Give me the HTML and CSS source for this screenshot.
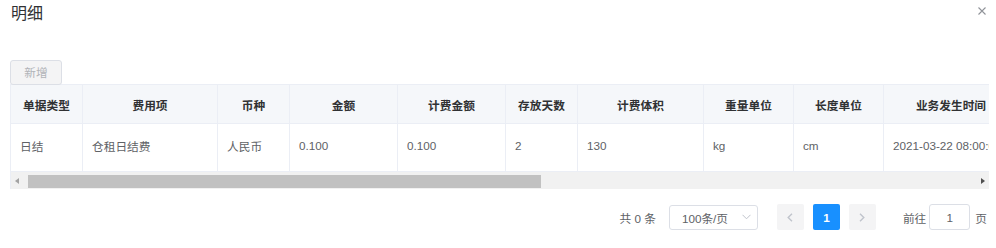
FILE: index.html
```html
<!DOCTYPE html>
<html lang="zh-CN">
<head>
<meta charset="utf-8">
<title>明细</title>
<link rel="stylesheet" href="styles.css">
</head>
<body>
<div class="dialog">
  <div class="dialog-header">
    <span class="dialog-title">明细</span>
    <button class="close-btn" aria-label="关闭">
      <svg width="8" height="8" viewBox="0 0 8 8"><path d="M0.5 0.5 L7.5 7.5 M7.5 0.5 L0.5 7.5" stroke="#909399" stroke-width="1.1" fill="none"/></svg>
    </button>
  </div>
  <div class="dialog-body">
    <div class="toolbar">
      <button class="btn-disabled">新增</button>
    </div>
    <div class="table-wrap">
      <div class="table-scroll">
        <table class="grid">
          <colgroup>
            <col class="w72"><col class="w135"><col class="w72"><col class="w108"><col class="w108">
            <col class="w72"><col class="w126"><col class="w90"><col class="w90"><col class="w135">
          </colgroup>
          <thead>
            <tr>
              <th>单据类型</th><th>费用项</th><th>币种</th><th>金额</th><th>计费金额</th>
              <th>存放天数</th><th>计费体积</th><th>重量单位</th><th>长度单位</th><th>业务发生时间</th>
            </tr>
          </thead>
          <tbody>
            <tr>
              <td>日结</td><td>仓租日结费</td><td>人民币</td><td>0.100</td><td>0.100</td>
              <td>2</td><td>130</td><td>kg</td><td>cm</td><td class="nowrap">2021-03-22 08:00:00</td>
            </tr>
          </tbody>
        </table>
      </div>
      <div class="hscroll">
        <div class="sb-btn"><span class="tri-left"></span></div>
        <div class="sb-track"><div class="sb-thumb"></div></div>
        <div class="sb-btn"><span class="tri-right"></span></div>
      </div>
    </div>
    <div class="pagination">
      <span class="total">共 0 条</span>
      <div class="select">
        <span>100条/页</span>
        <svg width="9" height="6" viewBox="0 0 9 6"><path d="M0.5 0.8 L4.5 4.8 L8.5 0.8" stroke="#c0c4cc" stroke-width="1" fill="none"/></svg>
      </div>
      <button class="pg-btn pg-prev" aria-label="上一页">
        <svg width="6" height="9" viewBox="0 0 6 9"><path d="M5 0.8 L1.2 4.5 L5 8.2" stroke="#c0c4cc" stroke-width="1.4" fill="none"/></svg>
      </button>
      <button class="pg-btn pg-active">1</button>
      <button class="pg-btn pg-next" aria-label="下一页">
        <svg width="6" height="9" viewBox="0 0 6 9"><path d="M1 0.8 L4.8 4.5 L1 8.2" stroke="#c0c4cc" stroke-width="1.4" fill="none"/></svg>
      </button>
      <span class="jump-label">前往</span>
      <div class="jump-input">1</div>
      <span class="jump-unit">页</span>
    </div>
  </div>
</div>
</body>
</html>
```

FILE: styles.css
```css
* { box-sizing: border-box; }
html, body { margin: 0; padding: 0; background: #fff; }
body {
  font-family: "Liberation Sans", "Noto Sans CJK SC", sans-serif;
  font-size: 11.7px;
  color: #606266;
  width: 996px;
  height: 248px;
  overflow: hidden;
}
.dialog { width: 996px; }
.dialog-header {
  display: flex;
  justify-content: space-between;
  align-items: flex-start;
  padding: 4px 10px 0 11px;
  height: 60px;
}
.dialog-title {
  font-size: 16px;
  line-height: 20px;
  color: #303133;
}
.close-btn {
  border: 0;
  background: none;
  padding: 0;
  margin-top: 3px;
  width: 8px;
  height: 8px;
  display: flex;
}
.dialog-body { padding: 0 7px 0 10px; }
.toolbar { display: flex; height: 25px; }
.btn-disabled {
  width: 52px;
  height: 25px;
  border: 1px solid #dcdfe6;
  border-radius: 3px;
  background: #f4f4f5;
  color: #b1b3b8;
  font-family: inherit;
  font-size: 11.7px;
  padding: 0;
  line-height: 23px;
}
.table-wrap {
  width: 979px;
  border-left: 1px solid #ebeef5;
  border-top: 1px solid #ebeef5;
  margin-top: -1px;
}
.table-scroll { overflow: hidden; width: 978px; }
.grid {
  table-layout: fixed;
  width: 1008px;
  border-collapse: separate;
  border-spacing: 0;
}
.w72 { width: 72px; }
.w90 { width: 90px; }
.w108 { width: 108px; }
.w126 { width: 126px; }
.w135 { width: 135px; }
.grid th, .grid td {
  border-right: 1px solid #ebeef5;
  border-bottom: 1px solid #ebeef5;
  padding: 0 9px;
  overflow: hidden;
  white-space: nowrap;
  vertical-align: middle;
}
.grid th {
  height: 39px;
  background: #f5f7fa;
  color: #303133;
  font-weight: bold;
  text-align: center;
  font-size: 11.7px;
}
.grid td {
  height: 48px;
  text-align: left;
  padding-bottom: 4px;
}
.hscroll {
  display: flex;
  height: 17px;
  width: 978px;
  background: #f1f1f1;
}
.sb-btn {
  width: 17px;
  height: 17px;
  display: flex;
  align-items: center;
  justify-content: center;
  flex: none;
}
.tri-left {
  width: 0; height: 0;
  border-top: 3px solid transparent;
  border-bottom: 3px solid transparent;
  border-right: 4px solid #a3a3a3;
  margin-left: -6px;
}
.tri-right {
  width: 0; height: 0;
  border-top: 3px solid transparent;
  border-bottom: 3px solid transparent;
  border-left: 4px solid #505050;
  margin-left: 4px;
}
.sb-track { flex: 1; position: relative; }
.sb-thumb {
  margin-top: 3px;
  width: 513px;
  height: 13px;
  background: #c1c1c1;
}
.pagination {
  display: flex;
  justify-content: flex-end;
  align-items: center;
  margin-top: 15px;
  padding-right: 2px;
  height: 26px;
}
.total { margin-right: 13px; }
.select {
  width: 89px;
  height: 25px;
  border: 1px solid #dcdfe6;
  border-radius: 3px;
  display: flex;
  align-items: center;
  justify-content: space-between;
  padding: 0 6px 0 12px;
  color: #606266;
  margin-right: 19px;
}
.pg-btn {
  width: 27px;
  height: 26px;
  border: 0;
  border-radius: 2px;
  background: #f4f4f5;
  padding: 0;
  display: flex;
  align-items: center;
  justify-content: center;
  font-family: inherit;
  font-size: 11.7px;
  font-weight: bold;
}
.pg-prev, .pg-active { margin-right: 9px; }
.pg-active { background: #1890ff; color: #fff; }
.pg-next { margin-right: 27px; }
.jump-label { margin-right: 3px; }
.jump-input {
  width: 41px;
  height: 26px;
  border: 1px solid #dcdfe6;
  border-radius: 3px;
  display: flex;
  align-items: center;
  justify-content: center;
  margin-right: 5px;
}
.nowrap { white-space: nowrap; }
```
